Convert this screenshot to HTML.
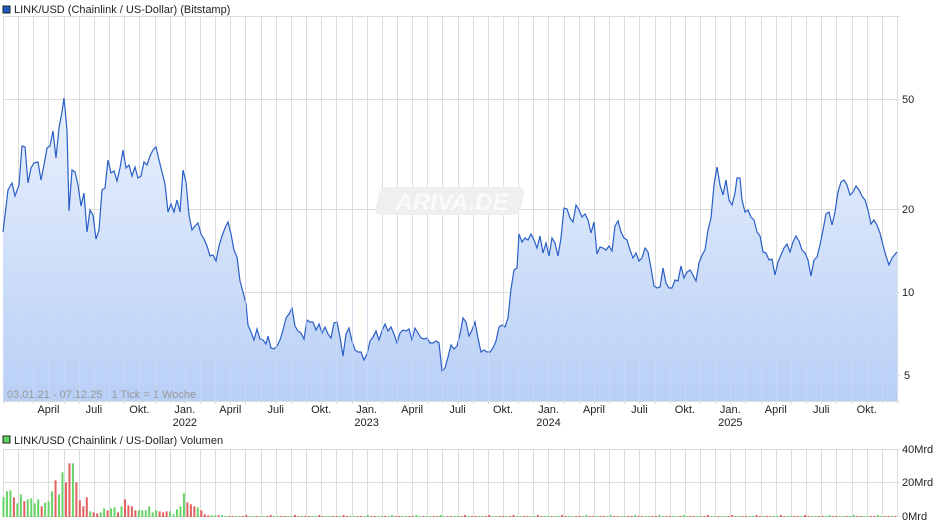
<!DOCTYPE html>
<html><head><meta charset="utf-8"><style>
body{margin:0;width:940px;height:526px;background:#fff;overflow:hidden;font-family:"Liberation Sans",sans-serif}
svg{position:absolute;left:0;top:0}
text{font-family:"Liberation Sans",sans-serif;font-size:11px;fill:#222}
</style></head><body>
<svg id="s" width="940" height="526" xmlns="http://www.w3.org/2000/svg">
<defs><linearGradient id="g" x1="0" y1="0" x2="0" y2="1"><stop offset="0" stop-color="#eaf1fd"/><stop offset="1" stop-color="#b8cff6"/></linearGradient></defs>
<rect x="3" y="6" width="7" height="7" fill="#1f5bc4" stroke="#222" stroke-width="1"/>
<text x="14" y="13">LINK/USD (Chainlink / US-Dollar) (Bitstamp)</text>
<g id="grid" stroke="#dcdcdc" stroke-width="1"></g>
<g transform="skewX(-12)"><rect x="420" y="187" width="145" height="28" rx="6" fill="#efefef"/></g>
<text x="452" y="210" text-anchor="middle" style="font-size:24px;font-style:italic;font-weight:bold;fill:#fafafa">ARIVA.DE</text>
<path id="fill" fill="url(#g)" stroke="none"/>
<polyline id="pl" fill="none" stroke="#2a5fc6" stroke-width="1.2"/>
<g id="grid2" stroke="#cfdcf3" stroke-width="1" opacity="0.6"></g>
<text x="7" y="398" xml:space="preserve" style="font-size:11px;fill:#999;white-space:pre">03.01.21 - 07.12.25   1 Tick = 1 Woche</text>
<g text-anchor="start">
<text x="902" y="103">50</text><text x="902" y="213">20</text><text x="902" y="296">10</text><text x="904" y="379">5</text>
</g>
<g id="xl" text-anchor="middle"></g>
<rect x="3" y="436" width="7" height="7" fill="#5fd35f" stroke="#222" stroke-width="1"/>
<text x="14" y="444">LINK/USD (Chainlink / US-Dollar) Volumen</text>
<g id="vgrid" stroke="#dcdcdc" stroke-width="1"></g>
<g id="bars"></g>
<text x="902" y="453">40Mrd</text><text x="902" y="486">20Mrd</text><text x="902" y="520">0Mrd</text>
</svg>
<script>
var NS="http://www.w3.org/2000/svg";
function el(p,t,a){var e=document.createElementNS(NS,t);for(var k in a)e.setAttribute(k,a[k]);p.appendChild(e);return e;}
var pts="3,232 8,190 12,183 15,196 19,185 22,146 25,147 28,183 31,168 34,163 38,162 41,180 44,165 47,148 50,146 53,131 56,158 59,128 62,112 64,98 67,130 69,211 72,170 75,172 78,185 81,206 84,193 87,232 90,210 93,215 96,239 99,230 102,190 105,188 108,160 111,173 114,171 117,181 120,168 123,150 126,168 129,165 132,176 135,167 138,178 141,176 144,162 147,165 150,156 153,150 156,147 159,160 162,172 165,184 168,212 171,204 174,212 177,200 180,212 183,170 186,182 189,215 192,230 195,226 198,223 201,234 204,239 207,246 210,256 213,255 216,261 219,246 222,236 225,228 228,222 231,234 234,250 237,257 240,281 243,292 246,304 248,325 251,332 254,340 257,329 260,339 263,340 266,344 268,336 271,348 274,349 277,346 280,340 283,330 286,318 289,314 292,308 295,326 298,331 301,333 304,339 307,320 310,322 313,322 316,330 319,324 322,333 325,327 328,334 331,338 334,323 337,322 340,337 343,356 346,334 349,328 352,341 355,350 358,352 361,352 364,360 367,354 370,341 373,337 376,331 379,340 382,331 385,324 388,331 391,327 394,334 397,343 400,333 403,330 406,331 409,329 412,340 415,328 418,333 421,338 424,339 427,338 430,343 433,343 436,341 439,343 442,371 445,368 448,357 451,345 454,349 457,346 460,334 463,318 466,322 469,336 472,330 475,322 478,338 481,352 484,350 487,352 490,352 493,348 496,341 499,327 502,325 505,327 508,318 511,289 514,270 517,268 519,234 522,242 525,238 528,240 531,234 534,240 537,248 540,236 543,253 546,243 549,256 552,238 555,243 558,256 561,238 564,208 567,209 570,218 573,222 576,205 579,210 582,217 585,214 588,220 591,233 594,222 597,254 600,247 603,248 606,250 609,246 612,251 615,226 618,221 621,232 624,238 627,240 630,250 633,258 636,253 639,261 642,258 645,248 648,252 651,268 654,286 657,288 660,287 663,268 666,283 669,288 672,288 675,280 678,281 681,266 684,278 687,272 690,270 693,275 696,281 699,263 702,255 705,250 708,230 711,218 714,185 717,167 720,185 723,195 726,180 729,200 732,205 735,193 737,178 740,178 742,200 745,212 748,210 751,217 754,220 757,232 760,236 763,252 766,253 769,260 772,259 775,275 778,262 781,255 784,248 787,244 790,252 793,242 796,236 799,241 802,250 805,253 808,260 811,276 814,260 817,257 820,245 823,230 826,214 829,212 832,225 835,212 838,192 841,182 844,180 847,185 850,195 853,192 856,186 859,190 862,196 865,200 868,210 871,224 874,220 877,225 880,233 883,245 886,256 889,265 892,258 897,252";
document.getElementById('pl').setAttribute('points',pts);
document.getElementById('fill').setAttribute('d','M3,401 L'+pts.replace(/ /g,' L')+' L897,401 Z');
var g=document.getElementById('grid'),g2=document.getElementById('grid2'),vg=document.getElementById('vgrid');
var mw=(897-3)/59;
for(var i=0;i<=59;i++){var x=Math.round(3+i*mw)+0.5;
 el(g,'line',{x1:x,y1:16,x2:x,y2:404});el(g2,'line',{x1:x,y1:300,x2:x,y2:401});
 el(vg,'line',{x1:x,y1:449,x2:x,y2:517});}
el(g,'line',{x1:897.5,y1:16,x2:897.5,y2:401});el(vg,'line',{x1:897.5,y1:449,x2:897.5,y2:517});
[16.5,99.5,209.5,292.5,375.5,401.5].forEach(function(y){el(g,'line',{x1:3,y1:y,x2:900,y2:y});});
[449.5,482.5,516.5].forEach(function(y){el(vg,'line',{x1:3,y1:y,x2:900,y2:y});});
var labs=["April","Juli","Okt.","Jan.","April","Juli","Okt.","Jan.","April","Juli","Okt.","Jan.","April","Juli","Okt.","Jan.","April","Juli","Okt."];
var yrs={3:"2022",7:"2023",11:"2024",15:"2025"};
var xl=document.getElementById('xl');
for(var j=0;j<labs.length;j++){var x=3+(j+1)*3*mw;var t=el(xl,'text',{x:x,y:413});t.textContent=labs[j];
 if(yrs[j]){var t2=el(xl,'text',{x:x,y:426});t2.textContent=yrs[j];}}
var tops=[[350,'g'],[333,'g'],[330,'g'],[351,'r'],[369,'g'],[342,'g'],[363,'r'],[357,'g'],[354,'g'],[369,'g'],[357,'g'],[378,'r'],[367,'g'],[363,'g'],[333,'g'],[300,'r'],[342,'g'],[276,'g'],[306,'r'],[249,'r'],[249,'g'],[306,'r'],[360,'r'],[378,'r'],[351,'r'],[393,'g'],[396,'r'],[399,'r'],[396,'g'],[384,'g'],[390,'r'],[384,'g'],[381,'g'],[396,'r'],[378,'g'],[357,'r'],[375,'r'],[378,'r'],[390,'r'],[390,'g'],[390,'g'],[390,'g'],[378,'g'],[396,'g'],[390,'g'],[393,'r'],[396,'r'],[393,'r'],[393,'g'],[402,'g'],[387,'g'],[378,'g'],[339,'g'],[366,'r'],[372,'r'],[378,'r'],[381,'g'],[390,'r'],[402,'r'],[405,'r'],[405,'g'],[405,'g'],[405,'r']];
var b=document.getElementById('bars');var step=3.47;
for(var k=0;k<258;k++){var x=2.5+k*step;var h,c;
 if(k<tops.length){h=(410-tops[k][0])/3;c=tops[k][1];}else{h=(k%7==0)?2:1;c=(Math.sin(k*1.7)>0)?'g':'r';}
 el(b,'rect',{x:x.toFixed(2),y:(517-h).toFixed(2),width:2,height:h.toFixed(2),fill:c=='g'?'#66d466':'#e06060'});}
</script>
</body></html>
